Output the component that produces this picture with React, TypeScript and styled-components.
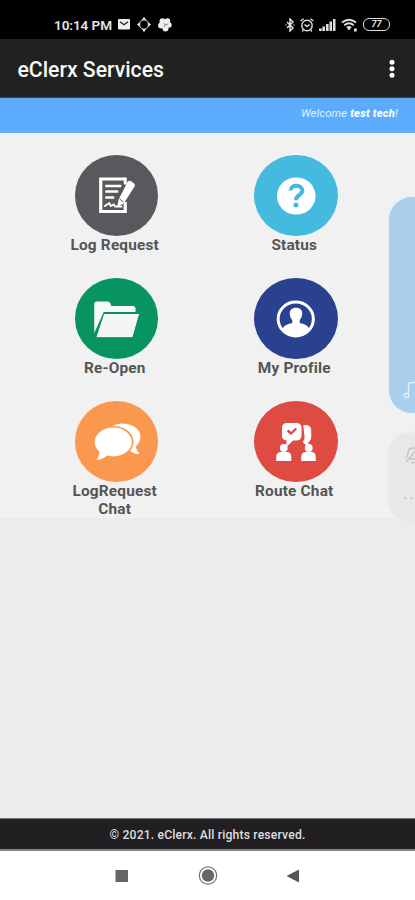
import React from 'react';
import styled, { createGlobalStyle } from 'styled-components';

const GlobalStyle = createGlobalStyle`
  * { box-sizing: border-box; }
  body { margin: 0; background: #ececec; font-family: Roboto, sans-serif; }
  svg { display: block; flex: none; }
`;

const Screen = styled.div`
  position: relative;
  width: 415px;
  height: 900px;
  overflow: hidden;
  display: flex;
  flex-direction: column;
  background: #ececec;
`;

const StatusBar = styled.header`
  height: 39px;
  padding: 10px 25px 0 54px;
  display: flex;
  align-items: flex-start;
  justify-content: space-between;
  background: #000;
  color: #e4e4e4;
`;

const StatusGroup = styled.div<{ $gap: number }>`
  display: flex;
  align-items: center;
  height: 29px;
  gap: ${(p) => p.$gap}px;
`;

const Clock = styled.span`
  font-size: 13.6px;
  font-weight: 600;
  white-space: nowrap;
  width: 57px;
  letter-spacing: -0.1px;
`;

const Battery = styled.span`
  width: 27px;
  height: 13px;
  border: 1.5px solid #ddd;
  border-radius: 6px;
  font-size: 9px;
  font-weight: 700;
  font-style: italic;
  line-height: 10px;
  text-align: center;
`;

const AppBar = styled.div`
  height: 59px;
  padding: 0 13px 0 17.5px;
  display: flex;
  align-items: center;
  justify-content: space-between;
  background: #212121;
  border-bottom: 1px solid #36434f;
`;

const Title = styled.h1`
  margin: 3px 0 0;
  font-size: 21.2px;
  font-weight: 500;
  color: #f7f7f7;
  white-space: nowrap;
`;

const MenuButton = styled.button`
  border: 0;
  padding: 2px 0 0;
  background: none;
`;

const Welcome = styled.div`
  height: 35px;
  padding: 9px 17px 0 0;
  background: #5cacfd;
  color: #e3f3ff;
  font-size: 11.2px;
  line-height: 13px;
  letter-spacing: 0.2px;
  font-style: italic;
  text-align: right;
  b { color: #fff; font-weight: 800; }
`;

const Tiles = styled.main`
  height: 385px;
  padding: 22px 0 0 26.5px;
  display: grid;
  grid-template-columns: 179.5px 179.5px;
  grid-auto-rows: 123px;
  background: #f1f1f1;
`;

const Tile = styled.div`
  display: flex;
  flex-direction: column;
  align-items: center;
`;

const Disc = styled.div<{ $color: string }>`
  width: 83.5px;
  height: 81px;
  border-radius: 50%;
  background: ${(p) => p.$color};
  svg { width: 100%; height: 100%; }
`;

const Label = styled.div`
  width: 110px;
  margin: 0 3px 0 0;
  text-align: center;
  font-size: 15.4px;
  font-weight: 700;
  line-height: 18px;
  letter-spacing: 0.18px;
  color: #555;
`;

const Filler = styled.div`
  flex: 1;
`;

const Footer = styled.footer`
  height: 33px;
  padding-top: 2px;
  display: flex;
  align-items: center;
  justify-content: center;
  background: #211f22;
  border-top: 1px solid #777;
  border-bottom: 2px solid #858585;
  color: #dedede;
  font-size: 12.2px;
  font-weight: 500;
  letter-spacing: 0.16px;
`;

const NavBar = styled.nav`
  height: 49px;
  padding: 0 114px;
  display: flex;
  align-items: center;
  justify-content: space-between;
  background: #fff;
`;

const VolumePanel = styled.div`
  position: absolute;
  top: 197px;
  right: -60px;
  width: 86px;
  height: 216px;
  border-radius: 23px;
  background: #aacfec;
  padding: 184px 0 0 14px;
  box-shadow: 0 0 3px #e2e8ec;
`;

const SoundPanel = styled.div`
  position: absolute;
  top: 433px;
  right: -60px;
  width: 86px;
  height: 88px;
  border-radius: 20px;
  background: #e8e8e8;
  box-shadow: 0 0 4px #e9e9e9;
  padding: 14px 0 0 14px;
`;

const LogIcon = () => (
  <svg viewBox="0 0 83 81">
    <path d="M50 24H25.5V56.500H50V47" fill="none" stroke="#fff" strokeWidth="3.200" />
    <path d="M50 22.500v7" stroke="#fff" strokeWidth="3" />
    <path d="M30 31h16M30 36.500h13M30 42.500h9" stroke="#fff" strokeWidth="2.600" />
    <path d="M29 51.500l5-3.500 1.500 3 3-1.500 1.500 2h7" fill="none" stroke="#fff" strokeWidth="1.800" />
    <path d="M52.500 26.500q2-1.500 4 .2l2 1.500q2 1.600.5 3.800L48.500 48.500l-6.500 3.300 1.500-7.500z" fill="#fff" />
    <path d="M44.500 44l3.700 3.200" stroke="#59595d" strokeWidth="1" />
  </svg>
);

const HelpIcon = () => (
  <svg viewBox="0 0 83 81">
    <ellipse cx="42" cy="41" rx="19.300" ry="18.600" fill="#fff" />
    <path d="M36.300 35.500c.4-6.600 11.700-6.200 11.700.2 0 4.300-6.300 4-6.300 9.500" fill="none" stroke="#45badf" strokeWidth="4" />
    <circle cx="41.700" cy="50" r="2.500" fill="#45badf" />
  </svg>
);

const FolderIcon = () => (
  <svg viewBox="0 0 83 81">
    <path d="M19 55V26q0-2.500 2.500-2.500h11q2 0 2.700 2l.8 2.500H58q2.300 0 2.300 2.500V34H28.500z" fill="#f8f8f8" />
    <path d="M28.500 35.500h36L57.500 59.700H20.500z" fill="#f5f5f5" stroke="#079461" strokeWidth="1" />
  </svg>
);

const ProfileIcon = () => (
  <svg viewBox="0 0 83 81">
    <ellipse cx="41.500" cy="41" rx="17.600" ry="17" fill="none" stroke="#fff" strokeWidth="3" />
    <path d="M28 51c2-4 6-5 10-6v-3c-2-2-2.500-4.500-2.500-7 0-7 12.500-7 12.500 0 0 2.500-.7 5-2.500 7v3c4 1 8 2 9.800 6q-5 7.500-13.600 7.500T28 51z" fill="#fff" />
  </svg>
);

const ChatIcon = () => (
  <svg viewBox="0 0 83 81">
    <path d="M37 25c8-5 22-2.500 26.500 5 3.300 5.500 1.700 11-3 15.500.5 3 1.500 5 4 7.300-4 .6-7-.7-9.500-3-1.500.7-3 1.100-5 1.300 10-9 9-23-13-26.100z" fill="#fff" />
    <ellipse cx="38" cy="41" rx="19.400" ry="15.200" fill="#fff" stroke="#fa9850" strokeWidth="1.600" />
    <path d="M24 48.500c.4 4.500-.6 7.600-2.500 10.500 5.500-.5 9-2.700 11.500-5.700z" fill="#fff" />
  </svg>
);

const RouteIcon = () => (
  <svg viewBox="0 0 83 81">
    <path d="M49.500 24.500h2q5 0 5 5V36q0 4-3 5.300l.8 5-5.300-5.300q2-2 1.800-5.500z" fill="#fff" stroke="#fff" strokeWidth="1" />
    <path d="M33 22h9q5.300 0 5.300 5v7q0 5.500-5.300 5.500h-3L32 46l.3-6.500q-4.600-.5-4.600-5V27q0-5 5.300-5z" fill="#fff" />
    <path d="M33.300 29.500l3.500 3 5.200-5" fill="none" stroke="#de4b43" strokeWidth="2.400" />
    <g fill="#fff">
      <circle cx="29.500" cy="47" r="3.900" />
      <path d="M22 60v-4q0-5 5-5h5.500q4.500 0 4.500 5v4zM47 60v-4q0-5 5-5h5q4.500 0 4.500 5v4z" />
      <circle cx="54.500" cy="47" r="3.900" />
    </g>
  </svg>
);

const TILES = [
  { label: 'Log Request', color: '#59595d', Icon: LogIcon },
  { label: 'Status', color: '#45badf', Icon: HelpIcon },
  { label: 'Re-Open', color: '#079461', Icon: FolderIcon },
  { label: 'My Profile', color: '#29418f', Icon: ProfileIcon },
  { label: 'LogRequest Chat', color: '#fa9850', Icon: ChatIcon },
  { label: 'Route Chat', color: '#de4b43', Icon: RouteIcon },
];

export default function App() {
  return (
    <>
      <GlobalStyle />
      <Screen>
        <StatusBar>
          <StatusGroup $gap={7}>
            <Clock>10:14 PM</Clock>
            <svg width="12" height="11" viewBox="0 0 12 11">
              <rect width="12" height="10.500" rx="1" fill="#eee" />
              <path d="M2 2.800l4 3 4-3" fill="none" stroke="#222" strokeWidth="1.300" />
            </svg>
            <svg width="14" height="15" viewBox="0 0 14 15">
              <circle cx="7" cy="7.500" r="4.500" fill="none" stroke="#ccc" strokeWidth="1.200" />
              <path d="M7 0l2.300 2.800H4.700zM7 15l2.300-2.800H4.700zM0 7.500l2.500-2.300v4.600zM14 7.500l-2.500-2.300v4.600z" fill="#eee" />
            </svg>
            <svg width="14" height="14" viewBox="0 0 14 14" fill="#eee">
              <circle cx="4.500" cy="3.300" r="3" /><circle cx="9.500" cy="3" r="2.700" />
              <circle cx="11" cy="7" r="2.700" /><circle cx="7.500" cy="10.500" r="3" />
              <circle cx="3" cy="7.500" r="2.900" /><circle cx="7" cy="6.500" r="2.800" />
              <path d="M6 5l1 2 3-1M7 7l-1 2" fill="none" stroke="#666" strokeWidth=".7" />
            </svg>
          </StatusGroup>
          <StatusGroup $gap={5}>
            <svg width="10" height="14" viewBox="0 0 10 14">
              <path d="M2 4l6 6-3 3V1l3 3-6 6M.5 7h1M8.500 7h1" fill="none" stroke="#ddd" strokeWidth="1.500" />
            </svg>
            <svg width="14" height="14" viewBox="0 0 14 14" fill="none" stroke="#ddd" strokeWidth="1.400">
              <circle cx="7" cy="7.500" r="5.200" /><path d="M.6 3l3-2.300M13.400 3l-3-2.300M4.500 6.500L7 8.500l2.500-2M3.200 12l-1 1.500M10.800 12l1 1.500" />
            </svg>
            <svg width="17" height="12" viewBox="0 0 17 12" fill="#ddd">
              <path d="M0 9.500h2.700V12H0zM3.400 7.500H6V12H3.400zM7 5h2.600v7H7zM10.500 2.500H13V12h-2.500zM14 0h2.500v12H14z" />
            </svg>
            <svg width="17" height="14" viewBox="0 0 17 14">
              <path d="M1 4.500q7-5.500 14 0M3.300 7.200q4.700-4 9.400 0" fill="none" stroke="#ddd" strokeWidth="1.900" />
              <path d="M5.300 9q2.700-2 5.400 0L8 12.500zM13 10.500h2.800v3H13z" fill="#ddd" />
            </svg>
            <Battery>77</Battery>
          </StatusGroup>
        </StatusBar>
        <AppBar>
          <Title>eClerx Services</Title>
          <MenuButton aria-label="More options">
            <svg width="20" height="20" viewBox="0 0 20 20" fill="#fff">
              <circle cx="10" cy="3.200" r="2.500" /><circle cx="10" cy="9.700" r="2.500" /><circle cx="10" cy="16.200" r="2.500" />
            </svg>
          </MenuButton>
        </AppBar>
        <Welcome>Welcome <b>test tech</b>!</Welcome>
        <Tiles>
          {TILES.map(({ label, color, Icon }) => (
            <Tile key={label}>
              <Disc $color={color}><Icon /></Disc>
              <Label>{label}</Label>
            </Tile>
          ))}
        </Tiles>
        <Filler />
        <Footer>© 2021. eClerx. All rights reserved.</Footer>
        <NavBar>
          <svg width="14" height="14" viewBox="0 0 14 14"><rect x="1.500" y="1" width="12.500" height="12" fill="#666" /></svg>
          <svg width="20" height="20" viewBox="0 0 20 20">
            <circle cx="10" cy="9.500" r="8.700" fill="none" stroke="#777" strokeWidth="1.300" />
            <circle cx="10" cy="9.500" r="6.200" fill="#666" />
          </svg>
          <svg width="14" height="14" viewBox="0 0 14 14"><path d="M-.3 7L12 .5v13z" fill="#555" /></svg>
        </NavBar>
        <VolumePanel>
          <svg width="20" height="20" viewBox="0 0 20 20" fill="none" stroke="#e4f1f9" strokeWidth="1.300">
            <path d="M5.500 14V2l12-1v12" /><circle cx="3.500" cy="14.500" r="2.200" /><circle cx="15" cy="13.500" r="2.500" />
          </svg>
        </VolumePanel>
        <SoundPanel>
          <svg width="20" height="60" viewBox="0 0 20 60" fill="none" stroke="#c4c4c4" strokeWidth="1.400">
            <path d="M3 15L15 1M2.500 11Q5 9 5 6c0-4 3-5 5-5s5 1 5 5 0 4 2 6H6M8 15q2 2 4 0" />
            <g fill="#c4c4c4" stroke="none"><circle cx="2.500" cy="51" r="1.200" /><circle cx="8.500" cy="51" r="1.200" /><circle cx="14.500" cy="51" r="1.200" /></g>
          </svg>
        </SoundPanel>
      </Screen>
    </>
  );
}
